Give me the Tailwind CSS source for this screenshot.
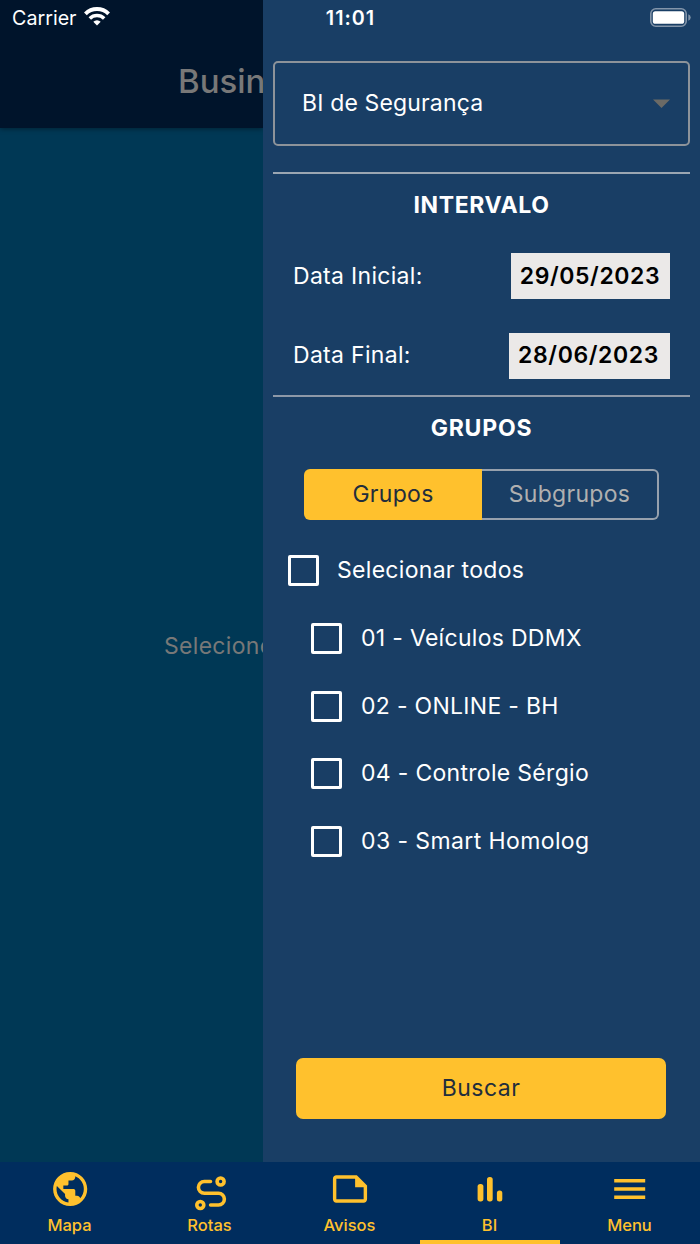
<!DOCTYPE html>
<html lang="pt-BR">
<head>
<meta charset="utf-8">
<title>Business Intelligence</title>
<script src="https://cdn.jsdelivr.net/npm/@tailwindcss/browser@4"></script>
</head>
<body class="relative flex h-[1244px] w-[700px] flex-col overflow-hidden bg-[#003855] font-['Inter',sans-serif] text-[23px] text-white">
  <div class="flex h-[1162px]">
    <section class="flex w-[263px] shrink-0 flex-col overflow-hidden whitespace-nowrap text-[#787878]">
      <header class="h-[128px] shrink-0 bg-[#00142b] pt-[61px] pl-[178px] text-[33px] leading-[41px] font-medium shadow-[0_1px_5px_rgba(0,0,0,0.4)]"><span>Business</span></header>
      <p class="mt-[503px] pl-[164px] leading-[30px] tracking-[0.3px]">Selecione</p>
    </section>

    <aside class="flex w-[437px] flex-col bg-[#193e65] px-[10px] pt-[61px]">
      <div class="flex h-[85px] shrink-0 items-center justify-between rounded-[5px] border-2 border-[#8d939a] pr-[18px] pl-[27px]">
        <span class="tracking-[0.15px]">BI de Segurança</span>
        <svg class="h-[9px] w-[17px]" viewBox="0 0 17 9"><path d="M0 .5h17L8.500 9z" fill="#6b6a66"/></svg>
      </div>
      <div class="mt-[26px] h-[2px] shrink-0 bg-[#9ba6b2]"></div>
      <h2 class="mt-[16px] text-center leading-[30px] font-bold tracking-[0.6px]">INTERVALO</h2>
      <div class="mt-[33px] flex h-[46px] items-center justify-between pr-[20px] pl-[20px]">
        <span class="tracking-[0.3px]">Data Inicial:</span>
        <span class="flex h-[46px] w-[159px] items-center justify-center bg-[#ebe9e8] pr-[1px] font-semibold tracking-[0.6px] text-black">29/05/2023</span>
      </div>
      <div class="mt-[33.500px] flex h-[46px] items-center justify-between pr-[20px] pl-[20px]">
        <span class="tracking-[0.3px]">Data Final:</span>
        <span class="flex h-[46px] w-[161px] items-center justify-center bg-[#ebe9e8] pr-[2px] font-semibold tracking-[0.6px] text-black">28/06/2023</span>
      </div>
      <div class="mt-[16.500px] h-[2px] shrink-0 bg-[#8d98a8]"></div>
      <h2 class="mt-[16px] text-center leading-[30px] font-bold tracking-[0.8px]">GRUPOS</h2>
      <div class="mt-[26px] ml-[31px] flex h-[51px] w-[355px] shrink-0">
        <div class="flex w-[178px] items-center justify-center rounded-l-[6px] bg-[#ffc12d] tracking-[0.3px] text-[#222d3c]">Grupos</div>
        <div class="flex w-[177px] items-center justify-center rounded-r-[6px] border-2 border-l-0 border-[#97a1ad] tracking-[0.3px] text-[#b0b0b0]">Subgrupos</div>
      </div>
      <label class="mt-[35px] ml-[15px] flex h-[31px] items-center gap-[18px]"><span class="size-[31px] rounded-[2px] border-[3px] border-white"></span><span class="tracking-[0.3px]">Selecionar todos</span></label>
      <div class="mt-[37px] ml-[38px] flex flex-col gap-[36.600px] whitespace-nowrap">
        <label class="flex h-[31px] items-center gap-[19px]"><span class="size-[31px] rounded-[2px] border-[3px] border-white"></span><span class="tracking-[0.3px]">01 - Veículos DDMX</span></label>
        <label class="flex h-[31px] items-center gap-[19px]"><span class="size-[31px] rounded-[2px] border-[3px] border-white"></span><span class="tracking-[0.3px]">02 - ONLINE - BH</span></label>
        <label class="flex h-[31px] items-center gap-[19px]"><span class="size-[31px] rounded-[2px] border-[3px] border-white"></span><span class="tracking-[0.3px]">04 - Controle Sérgio</span></label>
        <label class="flex h-[31px] items-center gap-[19px]"><span class="size-[31px] rounded-[2px] border-[3px] border-white"></span><span class="tracking-[0.4px]">03 - Smart Homolog</span></label>
      </div>
      <button class="mt-auto mb-[43px] ml-[23px] h-[61px] w-[370px] shrink-0 rounded-[7px] bg-[#ffc12d] tracking-[0.5px] text-[#222d3c]">Buscar</button>
    </aside>
  </div>

  <nav class="grid h-[82px] grid-cols-5 bg-[#002d5e] text-center text-[16.500px] leading-[20px] font-medium text-[#ffc12d]">
    <a class="flex flex-col items-center pt-[6px]">
      <svg class="h-[42px] w-[42px]" viewBox="-.4 -.3 24.600 24.600" fill="currentColor"><path d="M12 2C6.480 2 2 6.480 2 12s4.480 10 10 10 10-4.480 10-10S17.520 2 12 2zm-1 17.930c-3.950-.49-7-3.850-7-7.930 0-.62.08-1.210.21-1.790L9 15v1c0 1.100.9 2 2 2v1.930zm6.900-2.540c-.26-.81-1-1.390-1.900-1.390h-1v-3c0-.55-.45-1-1-1H8v-2h2c.55 0 1-.45 1-1V7h2c1.100 0 2-.9 2-2v-.41c2.930 1.190 5 4.060 5 7.410 0 2.080-.8 3.970-2.100 5.390z"/></svg>
      <span class="mt-[5px] pr-[1px]">Mapa</span>
    </a>
    <a class="flex flex-col items-center pt-[6px]">
      <svg class="h-[44px] w-[42px]" viewBox="189 1168 42 44" fill="none" stroke="currentColor" stroke-width="3.600" stroke-linecap="round"><circle cx="220.600" cy="1181.500" r="3.500"/><circle cx="200.300" cy="1205" r="3.500"/><path d="M210.500 1181.500H204.300a5.850 5.850 0 0 0 0 11.750H218.500a5.850 5.850 0 0 1 0 11.750H210.600"/></svg>
      <span class="mt-[3px] pr-[1px]">Rotas</span>
    </a>
    <a class="flex flex-col items-center pt-[6px]">
      <svg class="h-[42px] w-[42px]" viewBox="-.3 -.3 24.600 24.600" fill="currentColor"><path d="M16 4H4c-1.100 0-2 .9-2 2v12.010c0 1.100.9 1.990 2 1.990h16c1.100 0 2-.9 2-2v-8l-6-6zM4 18.010V6h11v5h5v7.010H4z"/></svg>
      <span class="mt-[5px] pr-[1px]">Avisos</span>
    </a>
    <a class="flex flex-col items-center border-b-4 border-[#ffc12d] pt-[6px]">
      <svg class="h-[42px] w-[42px]" viewBox="469 1168 42 42" fill="currentColor"><rect x="477.600" y="1184" width="5.800" height="17.400" rx="2.600"/><rect x="487" y="1177" width="5.700" height="24.400" rx="2.600"/><rect x="496.900" y="1190.600" width="5.400" height="10.800" rx="2.500"/></svg>
      <span class="mt-[5px] pr-[1px]">BI</span>
    </a>
    <a class="flex flex-col items-center pt-[6px]">
      <svg class="h-[42px] w-[42px]" viewBox="609 1168 42 42" fill="currentColor"><path d="M614.200 1179h31v3.400h-31zM614.200 1187.300h31v3.400h-31zM614.200 1195.600h31v3.400h-31z"/></svg>
      <span class="mt-[5px] pr-[1px]">Menu</span>
    </a>
  </nav>

  <!-- Status bar floats above both the page header and the drawer -->
  <div class="absolute inset-x-0 top-0 flex h-[37px] items-center justify-between pr-[9px] pl-[12px] text-[19.700px]">
    <div class="flex w-[250px] items-center gap-[7px]">
      <span class="pt-[1px]">Carrier</span>
      <svg class="-mt-[3px] h-[19px] w-[26px]" viewBox="0 0 26 19" fill="none" stroke="#fff"><path d="M1.400 6.800a16.500 16.500 0 0 1 23.200 0" stroke-width="3.900"/><path d="M5.800 11.400a10.300 10.300 0 0 1 14.400 0" stroke-width="3.500"/><path d="M13 18.500l-3.700-3.700a5.100 5.100 0 0 1 7.400 0z" fill="#fff" stroke="none"/></svg>
    </div>
    <span class="w-[180px] pt-[1px] pr-[2px] text-center font-semibold tracking-[1px]">11:01</span>
    <div class="flex w-[250px] justify-end"><svg class="-mt-[3px] h-[19px] w-[41px]" viewBox="0 0 41 19"><rect x=".8" y=".8" width="35.400" height="17.400" rx="5" fill="none" stroke="#8395aa" stroke-width="1.600"/><rect x="2.800" y="3.200" width="31.400" height="12.600" rx="2.600" fill="#fff"/><path d="M38.300 6.300q2.400 1 2.400 3.200t-2.400 3.200z" fill="#8395aa"/></svg></div>
  </div>
</body>
</html>
